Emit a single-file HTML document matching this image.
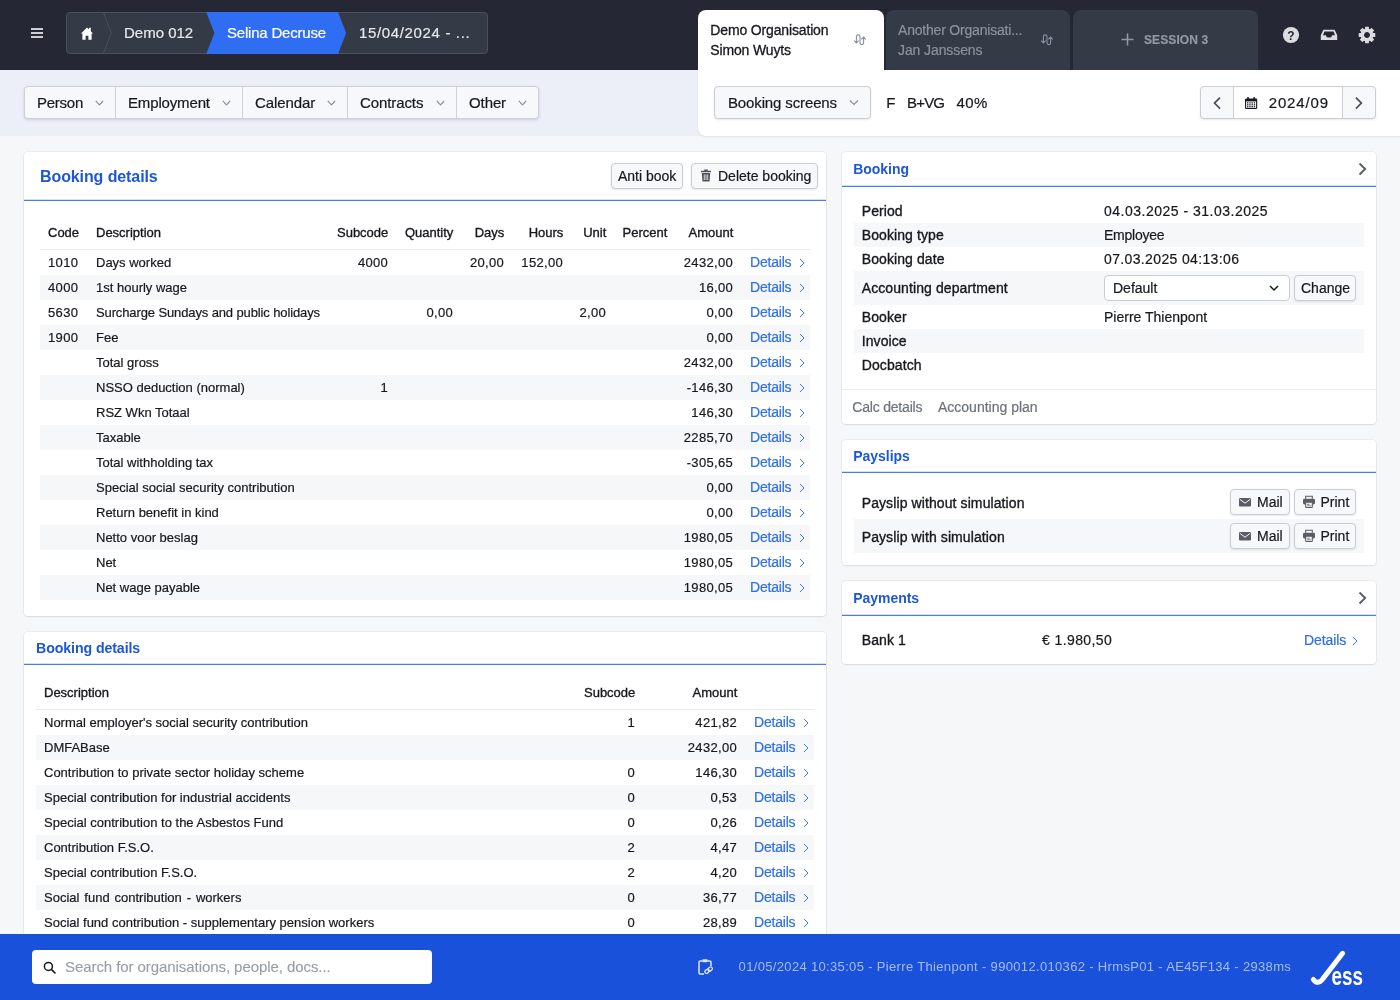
<!DOCTYPE html>
<html lang="en">
<head>
<meta charset="utf-8">
<title>Booking details</title>
<style>
*{box-sizing:border-box;margin:0;padding:0}
html,body{width:1400px;height:1000px;overflow:hidden}
body{will-change:transform;-webkit-text-stroke-width:.2px;font-family:"Liberation Sans",sans-serif;font-size:13px;color:#16181d;background:#f6f7f9;position:relative}
.abs{position:absolute}
/* top bar */
#top{position:absolute;left:0;top:0;width:1400px;height:70px;background:#252834}
#sub{position:absolute;left:0;top:70px;width:1400px;height:66px;background:#eceff8}
#bottom{position:absolute;left:0;top:934px;width:1400px;height:66px;background:#1a51da}
/* cards */
.card{position:absolute;background:#fff;border-radius:4px;box-shadow:0 0 0 1px rgba(20,30,60,.05),0 1px 2px rgba(20,30,60,.08)}
.card h2{position:absolute;color:#1d57d8;font-weight:bold;white-space:nowrap;-webkit-text-stroke-width:0}
.line{position:absolute;left:0;right:0;height:1px;background:#3f80f5;box-shadow:0 -1px 0 rgba(63,128,245,.25)}

/* top bar pieces */
.crumbs{position:absolute;left:66px;top:12px;width:422px;height:42px;background:#353a47;border:1px solid #4b505d;border-radius:4px;overflow:hidden;color:#e6e7ea;font-size:15px}
.crumbs span{position:absolute;top:0;line-height:40px;white-space:nowrap}
.tab{position:absolute;top:10px;height:60px;border-radius:8px 8px 0 0;font-size:14px;line-height:20px}
.tab .t{position:absolute;left:12.300px;white-space:nowrap}
.tab.on{background:#fff;color:#16181d}
.tab.off{background:#353a47;color:#8d919b}
.rpanel{position:absolute;left:698px;top:70px;width:702px;height:66px;background:#fff;border-radius:0 0 0 8px;box-shadow:0 1px 2px rgba(20,30,60,.10)}
.btn{position:absolute;background:#f7f8fa;border:1px solid #c9ccd3;border-radius:4px;color:#16181d;white-space:nowrap;box-shadow:0 1px 2px rgba(20,30,60,.10)}
.bg1{position:absolute;left:24px;top:86px;width:515px;height:33px;background:#f7f8fa;border:1px solid #cdd1da;border-radius:4px;box-shadow:0 1px 3px rgba(20,30,60,.16);font-size:15px}
.bg1 span{position:absolute;top:0;line-height:31px;white-space:nowrap}
.bg1 i{position:absolute;top:0;width:1px;height:31px;background:#cdd1da}
/* tables */
table{border-collapse:collapse;position:absolute;table-layout:fixed}
td,th{height:25px;padding:0 8px;font-size:13px;font-weight:normal;white-space:nowrap;overflow:visible;text-align:left;vertical-align:middle;line-height:25px}
th{height:34px;line-height:32px;padding-top:2px;-webkit-text-stroke-width:.35px}
thead tr{border-bottom:1px solid #e6e9f0}
tbody tr:nth-child(even){background:#f6f7f9}
td.r{text-align:right;padding-right:7.800px}th.r{text-align:right;padding-right:7.700px}
.n{letter-spacing:.35px}
td.d{color:#2f6fe4;font-size:14px;padding-left:9px;letter-spacing:-.2px;position:relative}
td.d svg{position:absolute;right:5px;top:7.500px}
.kv{position:absolute;left:12px;right:12px;font-size:14px;white-space:nowrap}
.kv.s{background:#f6f7f9}
.kv b{position:absolute;left:7.700px;font-weight:normal;-webkit-text-stroke-width:.35px;letter-spacing:.1px}
.kv span{position:absolute;left:250px}
.sb{font-size:14px;line-height:24px;height:26px;padding:0 6px}
</style>
</head>
<body>
<div id="top">
<svg class="abs" style="left:31px;top:28px" width="12" height="10" viewBox="0 0 12 10"><path d="M0 1h12M0 5h12M0 9h12" stroke="#cdcfd4" stroke-width="2"/></svg>
<div class="crumbs">
<svg class="abs" style="left:0;top:0" width="420" height="40" viewBox="0 0 420 40">
<path d="M36.200 -1 L44.200 20 L36.200 41" fill="none" stroke="#4b505d" stroke-width="1"/>
<path d="M14 20.600 L20 14.400 L22 16.400 V14.800 H23.800 V18.200 L26 20.600 H24.600 V26.800 H21.400 V22.800 H18.600 V26.800 H15.400 V20.600 Z" fill="#fff"/>
</svg>
<span style="left:57px">Demo 012</span>
<span style="left:292px;letter-spacing:.65px">15/04/2024 - ...</span>
</div>
<svg class="abs" style="left:66px;top:12px" width="422" height="42" viewBox="0 0 422 42"><path d="M140.200 0 L148.400 21 L140.200 42 L272 42 L280.200 21 L272 0 Z" fill="#2f6df3"/></svg>
<div class="abs" style="left:227px;top:13px;line-height:40px;font-size:15px;color:#fff;letter-spacing:-.2px;white-space:nowrap">Selina Decruse</div>
<div class="tab on" style="left:698px;width:186px"><div class="t" style="top:10px;letter-spacing:-.15px;-webkit-text-stroke-width:.3px">Demo Organisation</div><div class="t" style="top:30px;letter-spacing:-.15px;-webkit-text-stroke-width:.3px">Simon Wuyts</div>
<svg class="abs" style="left:155px;top:23px" width="14" height="13" viewBox="0 0 14 13"><path d="M3.400 9.700 V3.700 A1.800 1.800 0 0 1 7 3.700 V9.800 A1.800 1.800 0 0 0 10.600 9.800 V4.200 M1.200 7.600 L3.400 9.900 L5.600 7.600 M8.400 6.300 L10.600 4 L12.800 6.300" fill="none" stroke="#8b90a0" stroke-width="1.100"/></svg></div>
<div class="tab off" style="left:886px;width:184px"><div class="t" style="top:10px;left:12px;letter-spacing:-.2px">Another Organisati...</div><div class="t" style="top:30px;left:12px;letter-spacing:-.1px">Jan Janssens</div>
<svg class="abs" style="left:153.500px;top:23px" width="14" height="13" viewBox="0 0 14 13"><path d="M3.400 9.700 V3.700 A1.800 1.800 0 0 1 7 3.700 V9.800 A1.800 1.800 0 0 0 10.600 9.800 V4.200 M1.200 7.600 L3.400 9.900 L5.600 7.600 M8.400 6.300 L10.600 4 L12.800 6.300" fill="none" stroke="#8b90a0" stroke-width="1.100"/></svg></div>
<div class="tab off" style="left:1073px;width:185px"><svg class="abs" style="left:48px;top:23px" width="13" height="13" viewBox="0 0 13 13"><path d="M6.500 0.500V12.500M0.500 6.500H12.500" stroke="#9397a1" stroke-width="1.600"/></svg><div class="t" style="left:71px;top:20px;font-size:12px;font-weight:bold;letter-spacing:.1px;color:#9397a1">SESSION 3</div></div>
<svg class="abs" style="left:1282px;top:26px" width="18" height="18" viewBox="0 0 18 18"><circle cx="9" cy="9" r="8.100" fill="#dcdde0"/><text x="9" y="13.800" text-anchor="middle" font-family="Liberation Sans, sans-serif" font-weight="bold" font-size="12" fill="#252834">?</text></svg>
<svg class="abs" style="left:1320px;top:29px" width="18" height="12" viewBox="0 0 18 12"><path d="M0.800 6.200 L3.400 0.800 H14.600 L17.200 6.200 V11 H0.800 Z M3 6.200 H6 Q6 8.600 9 8.600 Q12 8.600 12 6.200 H15 L13.600 2.600 H4.400 Z" fill="#dcdde0" fill-rule="evenodd"/></svg>
<svg class="abs" style="left:1358px;top:26px" width="18" height="18" viewBox="-9 -9 18 18"><g fill="#dcdde0"><rect x="-1.900" y="-8.300" width="3.800" height="4" rx=".6" transform="rotate(0)"/><rect x="-1.900" y="-8.300" width="3.800" height="4" rx=".6" transform="rotate(45)"/><rect x="-1.900" y="-8.300" width="3.800" height="4" rx=".6" transform="rotate(90)"/><rect x="-1.900" y="-8.300" width="3.800" height="4" rx=".6" transform="rotate(135)"/><rect x="-1.900" y="-8.300" width="3.800" height="4" rx=".6" transform="rotate(180)"/><rect x="-1.900" y="-8.300" width="3.800" height="4" rx=".6" transform="rotate(225)"/><rect x="-1.900" y="-8.300" width="3.800" height="4" rx=".6" transform="rotate(270)"/><rect x="-1.900" y="-8.300" width="3.800" height="4" rx=".6" transform="rotate(315)"/></g><circle r="4.700" fill="none" stroke="#dcdde0" stroke-width="3.400"/></svg>
</div>
<div id="sub">
</div>
<div class="bg1">
<span style="left:12px;letter-spacing:-.25px">Person</span><i style="left:90px"></i>
<span style="left:103px;letter-spacing:-.15px">Employment</span><i style="left:217px"></i>
<span style="left:230px;letter-spacing:-.1px">Calendar</span><i style="left:322px"></i>
<span style="left:335px;letter-spacing:-.1px">Contracts</span><i style="left:431px"></i>
<span style="left:444px;letter-spacing:-.1px">Other</span>
<svg class="abs" style="left:0;top:0" width="513" height="31" viewBox="0 0 513 31"><g fill="none" stroke="#8a8e98" stroke-width="1.200"><path d="M70.800 13.900 L74.500 17.800 L78.200 13.900"/><path d="M197.800 13.900 L201.500 17.800 L205.200 13.900"/><path d="M302.800 13.900 L306.500 17.800 L310.200 13.900"/><path d="M411.800 13.900 L415.500 17.800 L419.200 13.900"/><path d="M493.800 13.900 L497.500 17.800 L501.200 13.900"/></g></svg>
</div>
<div class="rpanel">
<div class="btn" style="left:16px;top:16px;width:157px;height:33px;font-size:15px;line-height:31px;padding-left:13px;letter-spacing:-.13px">Booking screens<svg class="abs" style="left:134px;top:12px" width="10" height="7" viewBox="0 0 10 7"><path d="M1 1.500 L5 5.500 L9 1.500" fill="none" stroke="#8a8e98" stroke-width="1.200"/></svg></div>
<div class="abs" style="left:188.300px;top:16px;line-height:33px;font-size:15px;white-space:pre">F</div>
<div class="abs" style="left:209px;top:16px;line-height:33px;font-size:15px;white-space:pre;letter-spacing:-.8px">B+VG</div>
<div class="abs" style="left:258.500px;top:16px;line-height:33px;font-size:15px;white-space:pre;letter-spacing:.4px">40%</div>
<div class="btn" style="left:502px;top:16px;width:176px;height:33px"></div>
<div class="abs" style="left:535px;top:17px;width:110px;height:31px;background:#fff;border-left:1px solid #c8ccd5;border-right:1px solid #c8ccd5"></div>
<div class="abs" style="left:570.700px;top:16px;line-height:33px;font-size:15px;letter-spacing:.85px">2024/09</div>
<svg class="abs" style="left:502px;top:16px" width="176" height="34" viewBox="0 0 176 34"><g fill="none" stroke="#4b505c" stroke-width="1.700"><path d="M20 11.600 L14.500 17.100 L20 22.600"/><path d="M155.900 11.600 L161.400 17.100 L155.900 22.600"/></g>
<g fill="#16181d"><rect x="45" y="12.400" width="12.200" height="10.600" rx="1.300"/><rect x="46.100" y="15.400" width="10" height="6.500" fill="#fff"/><rect x="47.300" y="10.900" width="1.500" height="3" rx=".5"/><rect x="53.400" y="10.900" width="1.500" height="3" rx=".5"/><rect x="47.00" y="16.30" width="1.400" height="1.200"/><rect x="49.25" y="16.30" width="1.400" height="1.200"/><rect x="51.50" y="16.30" width="1.400" height="1.200"/><rect x="53.75" y="16.30" width="1.400" height="1.200"/><rect x="47.00" y="18.20" width="1.400" height="1.200"/><rect x="49.25" y="18.20" width="1.400" height="1.200"/><rect x="51.50" y="18.20" width="1.400" height="1.200"/><rect x="53.75" y="18.20" width="1.400" height="1.200"/><rect x="47.00" y="20.10" width="1.400" height="1.200"/><rect x="49.25" y="20.10" width="1.400" height="1.200"/><rect x="51.50" y="20.10" width="1.400" height="1.200"/><rect x="53.75" y="20.10" width="1.400" height="1.200"/></g></svg>
</div>
<div class="card" style="left:24px;top:152px;width:802px;height:464px">
<h2 style="left:16px;top:15px;font-size:16px;line-height:20px;letter-spacing:-.1px">Booking details</h2>
<div class="btn sb" style="left:587px;top:11px;width:72px;text-align:center">Anti book</div>
<div class="btn sb" style="left:667px;top:11px;width:127px;padding-left:26px">Delete booking<svg class="abs" style="left:8px;top:5px" width="12" height="13" viewBox="0 0 12 13"><path d="M4.200 0.600 H7.800 V1.800 H11 V3.200 H1 V1.800 H4.200 Z M1.800 4 H10.200 L9.500 12.400 H2.500 Z" fill="#50535c"/><path d="M4.300 5.500 V11 M6 5.500 V11 M7.700 5.500 V11" stroke="#f7f8fa" stroke-width=".8"/></svg></div>
<div class="line" style="top:48px"></div>
<table style="left:16px;top:63px;width:770px">
<colgroup><col style="width:48px"><col style="width:233px"><col style="width:75px"><col style="width:65px"><col style="width:51px"><col style="width:59px"><col style="width:43px"><col style="width:61px"><col style="width:66px"><col style="width:69px"></colgroup>
<thead><tr><th>Code</th><th>Description</th><th class="r">Subcode</th><th class="r">Quantity</th><th class="r">Days</th><th class="r">Hours</th><th class="r">Unit</th><th class="r">Percent</th><th class="r">Amount</th><th></th></tr></thead>
<tbody>
<tr><td class="n">1010</td><td>Days worked</td><td class="r n">4000</td><td class="r n"></td><td class="r n">20,00</td><td class="r n">152,00</td><td class="r n"></td><td class="r n"></td><td class="r n">2432,00</td><td class="d">Details<svg width="6" height="10" viewBox="0 0 6 10"><path d="M1 1 L5 5 L1 9" fill="none" stroke="#3f7ae8" stroke-width="1"/></svg></td></tr>
<tr><td class="n">4000</td><td>1st hourly wage</td><td class="r n"></td><td class="r n"></td><td class="r n"></td><td class="r n"></td><td class="r n"></td><td class="r n"></td><td class="r n">16,00</td><td class="d">Details<svg width="6" height="10" viewBox="0 0 6 10"><path d="M1 1 L5 5 L1 9" fill="none" stroke="#3f7ae8" stroke-width="1"/></svg></td></tr>
<tr><td class="n">5630</td><td style="letter-spacing:-.12px">Surcharge Sundays and public holidays</td><td class="r n"></td><td class="r n">0,00</td><td class="r n"></td><td class="r n"></td><td class="r n">2,00</td><td class="r n"></td><td class="r n">0,00</td><td class="d">Details<svg width="6" height="10" viewBox="0 0 6 10"><path d="M1 1 L5 5 L1 9" fill="none" stroke="#3f7ae8" stroke-width="1"/></svg></td></tr>
<tr><td class="n">1900</td><td>Fee</td><td class="r n"></td><td class="r n"></td><td class="r n"></td><td class="r n"></td><td class="r n"></td><td class="r n"></td><td class="r n">0,00</td><td class="d">Details<svg width="6" height="10" viewBox="0 0 6 10"><path d="M1 1 L5 5 L1 9" fill="none" stroke="#3f7ae8" stroke-width="1"/></svg></td></tr>
<tr><td class="n"></td><td>Total gross</td><td class="r n"></td><td class="r n"></td><td class="r n"></td><td class="r n"></td><td class="r n"></td><td class="r n"></td><td class="r n">2432,00</td><td class="d">Details<svg width="6" height="10" viewBox="0 0 6 10"><path d="M1 1 L5 5 L1 9" fill="none" stroke="#3f7ae8" stroke-width="1"/></svg></td></tr>
<tr><td class="n"></td><td>NSSO deduction (normal)</td><td class="r n">1</td><td class="r n"></td><td class="r n"></td><td class="r n"></td><td class="r n"></td><td class="r n"></td><td class="r n">-146,30</td><td class="d">Details<svg width="6" height="10" viewBox="0 0 6 10"><path d="M1 1 L5 5 L1 9" fill="none" stroke="#3f7ae8" stroke-width="1"/></svg></td></tr>
<tr><td class="n"></td><td>RSZ Wkn Totaal</td><td class="r n"></td><td class="r n"></td><td class="r n"></td><td class="r n"></td><td class="r n"></td><td class="r n"></td><td class="r n">146,30</td><td class="d">Details<svg width="6" height="10" viewBox="0 0 6 10"><path d="M1 1 L5 5 L1 9" fill="none" stroke="#3f7ae8" stroke-width="1"/></svg></td></tr>
<tr><td class="n"></td><td>Taxable</td><td class="r n"></td><td class="r n"></td><td class="r n"></td><td class="r n"></td><td class="r n"></td><td class="r n"></td><td class="r n">2285,70</td><td class="d">Details<svg width="6" height="10" viewBox="0 0 6 10"><path d="M1 1 L5 5 L1 9" fill="none" stroke="#3f7ae8" stroke-width="1"/></svg></td></tr>
<tr><td class="n"></td><td>Total withholding tax</td><td class="r n"></td><td class="r n"></td><td class="r n"></td><td class="r n"></td><td class="r n"></td><td class="r n"></td><td class="r n">-305,65</td><td class="d">Details<svg width="6" height="10" viewBox="0 0 6 10"><path d="M1 1 L5 5 L1 9" fill="none" stroke="#3f7ae8" stroke-width="1"/></svg></td></tr>
<tr><td class="n"></td><td>Special social security contribution</td><td class="r n"></td><td class="r n"></td><td class="r n"></td><td class="r n"></td><td class="r n"></td><td class="r n"></td><td class="r n">0,00</td><td class="d">Details<svg width="6" height="10" viewBox="0 0 6 10"><path d="M1 1 L5 5 L1 9" fill="none" stroke="#3f7ae8" stroke-width="1"/></svg></td></tr>
<tr><td class="n"></td><td>Return benefit in kind</td><td class="r n"></td><td class="r n"></td><td class="r n"></td><td class="r n"></td><td class="r n"></td><td class="r n"></td><td class="r n">0,00</td><td class="d">Details<svg width="6" height="10" viewBox="0 0 6 10"><path d="M1 1 L5 5 L1 9" fill="none" stroke="#3f7ae8" stroke-width="1"/></svg></td></tr>
<tr><td class="n"></td><td>Netto voor beslag</td><td class="r n"></td><td class="r n"></td><td class="r n"></td><td class="r n"></td><td class="r n"></td><td class="r n"></td><td class="r n">1980,05</td><td class="d">Details<svg width="6" height="10" viewBox="0 0 6 10"><path d="M1 1 L5 5 L1 9" fill="none" stroke="#3f7ae8" stroke-width="1"/></svg></td></tr>
<tr><td class="n"></td><td>Net</td><td class="r n"></td><td class="r n"></td><td class="r n"></td><td class="r n"></td><td class="r n"></td><td class="r n"></td><td class="r n">1980,05</td><td class="d">Details<svg width="6" height="10" viewBox="0 0 6 10"><path d="M1 1 L5 5 L1 9" fill="none" stroke="#3f7ae8" stroke-width="1"/></svg></td></tr>
<tr><td class="n"></td><td>Net wage payable</td><td class="r n"></td><td class="r n"></td><td class="r n"></td><td class="r n"></td><td class="r n"></td><td class="r n"></td><td class="r n">1980,05</td><td class="d">Details<svg width="6" height="10" viewBox="0 0 6 10"><path d="M1 1 L5 5 L1 9" fill="none" stroke="#3f7ae8" stroke-width="1"/></svg></td></tr>
</tbody></table>
</div>
<div class="card" style="left:24px;top:632px;width:802px;height:420px">
<h2 style="left:12px;top:6px;font-size:14.200px;line-height:20px;letter-spacing:-.1px">Booking details</h2>
<div class="line" style="top:32px"></div>
<table style="left:12px;top:43px;width:778px">
<colgroup><col><col style="width:100px"><col style="width:102px"><col style="width:69px"></colgroup>
<thead><tr><th>Description</th><th class="r">Subcode</th><th class="r">Amount</th><th></th></tr></thead>
<tbody>
<tr><td>Normal employer's social security contribution</td><td class="r n">1</td><td class="r n">421,82</td><td class="d">Details<svg width="6" height="10" viewBox="0 0 6 10"><path d="M1 1 L5 5 L1 9" fill="none" stroke="#3f7ae8" stroke-width="1"/></svg></td></tr>
<tr><td>DMFABase</td><td class="r n"></td><td class="r n">2432,00</td><td class="d">Details<svg width="6" height="10" viewBox="0 0 6 10"><path d="M1 1 L5 5 L1 9" fill="none" stroke="#3f7ae8" stroke-width="1"/></svg></td></tr>
<tr><td>Contribution to private sector holiday scheme</td><td class="r n">0</td><td class="r n">146,30</td><td class="d">Details<svg width="6" height="10" viewBox="0 0 6 10"><path d="M1 1 L5 5 L1 9" fill="none" stroke="#3f7ae8" stroke-width="1"/></svg></td></tr>
<tr><td>Special contribution for industrial accidents</td><td class="r n">0</td><td class="r n">0,53</td><td class="d">Details<svg width="6" height="10" viewBox="0 0 6 10"><path d="M1 1 L5 5 L1 9" fill="none" stroke="#3f7ae8" stroke-width="1"/></svg></td></tr>
<tr><td>Special contribution to the Asbestos Fund</td><td class="r n">0</td><td class="r n">0,26</td><td class="d">Details<svg width="6" height="10" viewBox="0 0 6 10"><path d="M1 1 L5 5 L1 9" fill="none" stroke="#3f7ae8" stroke-width="1"/></svg></td></tr>
<tr><td>Contribution F.S.O.</td><td class="r n">2</td><td class="r n">4,47</td><td class="d">Details<svg width="6" height="10" viewBox="0 0 6 10"><path d="M1 1 L5 5 L1 9" fill="none" stroke="#3f7ae8" stroke-width="1"/></svg></td></tr>
<tr><td>Special contribution F.S.O.</td><td class="r n">2</td><td class="r n">4,20</td><td class="d">Details<svg width="6" height="10" viewBox="0 0 6 10"><path d="M1 1 L5 5 L1 9" fill="none" stroke="#3f7ae8" stroke-width="1"/></svg></td></tr>
<tr><td style="word-spacing:1.300px">Social fund contribution - workers</td><td class="r n">0</td><td class="r n">36,77</td><td class="d">Details<svg width="6" height="10" viewBox="0 0 6 10"><path d="M1 1 L5 5 L1 9" fill="none" stroke="#3f7ae8" stroke-width="1"/></svg></td></tr>
<tr><td>Social fund contribution - supplementary pension workers</td><td class="r n">0</td><td class="r n">28,89</td><td class="d">Details<svg width="6" height="10" viewBox="0 0 6 10"><path d="M1 1 L5 5 L1 9" fill="none" stroke="#3f7ae8" stroke-width="1"/></svg></td></tr>
<tr><td>Special contribution temporary unemployment</td><td class="r n">0</td><td class="r n">2,43</td><td class="d">Details<svg width="6" height="10" viewBox="0 0 6 10"><path d="M1 1 L5 5 L1 9" fill="none" stroke="#3f7ae8" stroke-width="1"/></svg></td></tr>
</tbody></table>
</div>
<div class="card" style="left:842px;top:152px;width:534px;height:272px">
<h2 style="left:11.300px;top:7px;font-size:14px;line-height:20px;letter-spacing:-.05px">Booking</h2><svg class="abs" style="right:9px;top:10px" width="9" height="14" viewBox="0 0 9 14"><path d="M1.500 1.500 L7.200 7 L1.500 12.500" fill="none" stroke="#555a66" stroke-width="1.800"/></svg>
<div class="line" style="top:34px"></div>
<div class="kv" style="top:47px;height:24px;line-height:24px"><b>Period</b><span><span style="position:static;letter-spacing:.5px">04.03.2025 - 31.03.2025</span></span></div>
<div class="kv s" style="top:71px;height:24px;line-height:24px"><b>Booking type</b><span style="letter-spacing:-.25px">Employee</span></div>
<div class="kv" style="top:95px;height:24px;line-height:24px"><b>Booking date</b><span><span style="position:static;letter-spacing:.36px">07.03.2025 04:13:06</span></span></div>
<div class="kv s" style="top:119px;height:34px;line-height:34px"><b>Accounting department</b><span></span></div>
<div class="kv" style="top:153px;height:24px;line-height:24px"><b>Booker</b><span>Pierre Thienpont</span></div>
<div class="kv s" style="top:177px;height:24px;line-height:24px"><b>Invoice</b><span></span></div>
<div class="kv" style="top:201px;height:24px;line-height:24px"><b>Docbatch</b><span></span></div>
<div class="abs" style="left:262px;top:123px;width:186px;height:26px;background:#fff;border:1px solid #c8ccd5;border-radius:4px;font-size:14px;line-height:24px;padding-left:8px">Default<svg class="abs" style="left:164px;top:9px" width="10" height="7" viewBox="0 0 10 7"><path d="M1 1 L5 5 L9 1" fill="none" stroke="#16181d" stroke-width="1.500"/></svg></div>
<div class="btn sb" style="left:452px;top:123px;width:62px;height:26px;line-height:24px;text-align:center">Change</div>
<div class="abs" style="left:0;right:0;top:237px;height:1px;background:#e9ebf0"></div>
<div class="abs" style="left:10.300px;top:245px;font-size:14px;line-height:20px;color:#6d717b;letter-spacing:-.2px">Calc details</div>
<div class="abs" style="left:96px;top:245px;font-size:14px;line-height:20px;color:#6d717b">Accounting plan</div>
</div>
<div class="card" style="left:842px;top:440px;width:534px;height:125px">
<h2 style="left:11.300px;top:6px;font-size:14px;line-height:20px;letter-spacing:-.05px">Payslips</h2>
<div class="line" style="top:32px"></div>
<div class="kv" style="top:45px;height:34px;line-height:36px"><b>Payslip without simulation</b><span></span></div>
<div class="kv s" style="top:79px;height:34px;line-height:36px"><b>Payslip with simulation</b><span></span></div>
<div class="btn sb" style="left:388px;top:49px;width:60px;padding-left:26px">Mail<svg class="abs" style="left:8px;top:7.500px" width="12" height="9" viewBox="0 0 12 9"><rect x="0" y="0" width="12" height="8.500" rx="1" fill="#5a5d66"/><path d="M0.800 1.300 L6 5.200 L11.200 1.300" fill="none" stroke="#f7f8fa" stroke-width="1"/></svg></div>
<div class="btn sb" style="left:452px;top:49px;width:62px;padding-left:25.500px">Print<svg class="abs" style="left:7px;top:4.500px" width="14" height="14" viewBox="0 0 14 14"><path d="M3.700 3.800 V1.200 H10.300 V3.800" fill="none" stroke="#5a5d66" stroke-width="1.100"/><rect x="1" y="3.800" width="12" height="5.600" rx="1.400" fill="#5a5d66"/><rect x="3.700" y="7.200" width="6.600" height="5.300" rx=".5" fill="#f7f8fa" stroke="#5a5d66" stroke-width="1.100"/><path d="M5.200 9.300h2.400M5.200 10.800h3.600" stroke="#5a5d66" stroke-width=".8"/></svg></div>
<div class="btn sb" style="left:388px;top:83px;width:60px;padding-left:26px">Mail<svg class="abs" style="left:8px;top:7.500px" width="12" height="9" viewBox="0 0 12 9"><rect x="0" y="0" width="12" height="8.500" rx="1" fill="#5a5d66"/><path d="M0.800 1.300 L6 5.200 L11.200 1.300" fill="none" stroke="#f7f8fa" stroke-width="1"/></svg></div>
<div class="btn sb" style="left:452px;top:83px;width:62px;padding-left:25.500px">Print<svg class="abs" style="left:7px;top:4.500px" width="14" height="14" viewBox="0 0 14 14"><path d="M3.700 3.800 V1.200 H10.300 V3.800" fill="none" stroke="#5a5d66" stroke-width="1.100"/><rect x="1" y="3.800" width="12" height="5.600" rx="1.400" fill="#5a5d66"/><rect x="3.700" y="7.200" width="6.600" height="5.300" rx=".5" fill="#f7f8fa" stroke="#5a5d66" stroke-width="1.100"/><path d="M5.200 9.300h2.400M5.200 10.800h3.600" stroke="#5a5d66" stroke-width=".8"/></svg></div>
</div>
<div class="card" style="left:842px;top:581px;width:534px;height:83px">
<h2 style="left:11.300px;top:7px;font-size:14px;line-height:20px;letter-spacing:-.05px">Payments</h2><svg class="abs" style="right:9px;top:10px" width="9" height="14" viewBox="0 0 9 14"><path d="M1.500 1.500 L7.200 7 L1.500 12.500" fill="none" stroke="#555a66" stroke-width="1.800"/></svg>
<div class="line" style="top:34px"></div>
<div class="kv" style="top:47px;height:24px;line-height:24px"><b>Bank 1</b><span style="left:188px;letter-spacing:.4px">€ 1.980,50</span><span style="left:450px;color:#2f6fe4;letter-spacing:-.1px">Details</span><svg class="abs" style="left:498px;top:7.500px" width="6" height="10" viewBox="0 0 6 10"><path d="M1 1 L5 5 L1 9" fill="none" stroke="#3f7ae8" stroke-width="1"/></svg></div>
</div>
<div id="bottom">
<div class="abs" style="left:32px;top:16px;width:400px;height:34px;background:#fff;border-radius:4px"></div>
<svg class="abs" style="left:43px;top:27px" width="13" height="13" viewBox="0 0 13 13"><circle cx="5.400" cy="5.400" r="4" fill="none" stroke="#16181d" stroke-width="1.500"/><path d="M8.400 8.400 L12 12" stroke="#16181d" stroke-width="1.600" stroke-linecap="round"/></svg>
<div class="abs" style="left:65px;top:16px;line-height:34px;font-size:15px;color:#979ca6;letter-spacing:-.07px;white-space:nowrap;-webkit-text-stroke-width:.1px">Search for organisations, people, docs...</div>
<svg class="abs" style="left:697px;top:24px" width="17" height="18" viewBox="0 0 17 18"><path d="M5.500 3 H3.300 Q2 3 2 4.300 V14.700 Q2 16 3.300 16 H7 M10.500 3 H12.700 Q14 3 14 4.300 V8" fill="none" stroke="#dfe6f8" stroke-width="1.500"/><rect x="5.300" y="1.300" width="5.400" height="3" rx=".8" fill="#dfe6f8"/><g transform="rotate(-36 11.600 12.200)" fill="none" stroke="#dfe6f8" stroke-width="1.300"><rect x="7.300" y="10.500" width="4.800" height="3.400" rx="1.700"/><rect x="11.100" y="10.500" width="4.800" height="3.400" rx="1.700"/></g></svg>
<div class="abs" style="left:738.600px;top:23px;line-height:20px;font-size:13px;color:#a6bcf1;letter-spacing:.335px;white-space:nowrap;-webkit-text-stroke-width:0">01/05/2024 10:35:05 - Pierre Thienpont - 990012.010362 - HrmsP01 - AE45F134 - 2938ms</div>
<svg class="abs" style="left:1306px;top:12px" width="62" height="44" viewBox="0 0 62 44"><path d="M7.300 33.400 Q12 39.600 17 32.600 L36.600 7.300" fill="none" stroke="#fff" stroke-width="5" stroke-linecap="round" stroke-linejoin="round"/><text x="25.600" y="38.600" font-family="Liberation Sans, sans-serif" font-size="26" font-weight="bold" fill="#fff" textLength="31.500" lengthAdjust="spacingAndGlyphs">ess</text></svg>
</div>
</body>
</html>
